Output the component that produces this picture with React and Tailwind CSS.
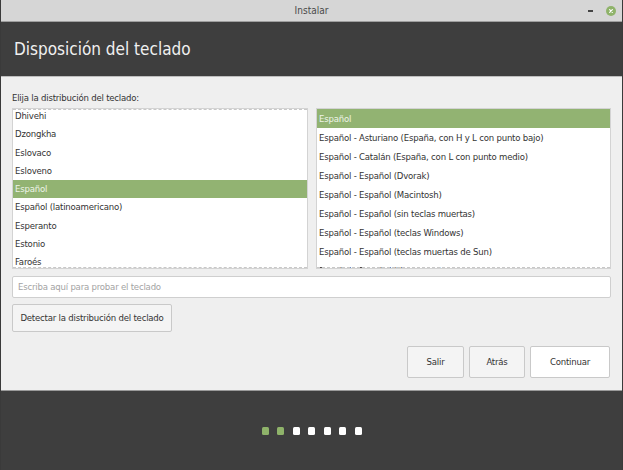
import React from "react";

const leftItems = ["Dhivehi","Dzongkha","Eslovaco","Esloveno","Español","Español (latinoamericano)","Esperanto","Estonio","Faroés","Filipino"];
const rightItems = ["Español","Español - Asturiano (España, con H y L con punto bajo)","Español - Catalán (España, con L con punto medio)","Español - Español (Dvorak)","Español - Español (Macintosh)","Español - Español (sin teclas muertas)","Español - Español (teclas Windows)","Español - Español (teclas muertas de Sun)","Español - Español (tilde muerta)"];

export default function App() {
  return (
    <div className="w-[623px] h-[470px] flex flex-col bg-[#efefef] border-x border-[#3a3a3a] overflow-hidden text-[#333]" style={{fontFamily: '"DejaVu Sans Condensed", "Liberation Sans Narrow", "Noto Sans", sans-serif'}}>
      <div className="h-[22px] shrink-0 bg-[#d6d6d6] border-b border-[#9e9e9e] relative flex items-center justify-center">
        <span className="text-[10px] text-[#4a4a4a]">Instalar</span>
        <span className="absolute left-[587px] top-[10px] w-[5px] h-[2px] bg-[#444]"></span>
        <span className="absolute left-[605px] top-[6px] w-[10px] h-[10px] rounded-full bg-[#8fb36a] flex items-center justify-center">
          <svg width="4" height="4" viewBox="0 0 4 4"><path d="M0.3 0.3L3.7 3.7M3.7 0.3L0.3 3.7" stroke="#fff" strokeWidth="1.2"/></svg>
        </span>
      </div>
      <div className="h-[55px] shrink-0 bg-[#3e3e3e] border-b border-[#bdbdbd] flex items-center pl-[13px]">
        <span className="text-[17px] text-[#f0f0f0] leading-none whitespace-nowrap">Disposición del teclado</span>
      </div>
      <div className="flex-1 flex flex-col pl-[11px] pr-[11px] tracking-[-0.2px]">
        <div className="mt-[12px] h-[19px] text-[9.5px] leading-[17px] whitespace-nowrap">Elija la distribución del teclado:</div>
        <div className="flex gap-[8px] h-[161px]">
          <div className="w-[297px] bg-white border border-[#d3d3d3] overflow-hidden relative">
            <div className="absolute left-0 right-0 top-0 border-t border-dashed border-[#c8c8c8] z-10"></div>
            <div className="absolute left-0 right-0 bottom-0 border-t border-dashed border-[#c8c8c8] z-10"></div>
            <div className="-mt-[2px]">
              {leftItems.map((t) => (
                <div key={t} className={"h-[18.25px] leading-[18.25px] px-[2px] text-[9.5px] whitespace-nowrap " + (t === "Español" ? "bg-[#92b372] text-[#eef3e8]" : "")}>{t}</div>
              ))}
            </div>
          </div>
          <div className="w-[296px] bg-white border border-[#d3d3d3] overflow-hidden relative">
            <div className="absolute left-0 right-0 bottom-0 border-t border-dashed border-[#c8c8c8] z-10"></div>
            <div>
              {rightItems.map((t, i) => (
                <div key={t} className={"h-[19px] leading-[19px] px-[2px] text-[9.5px] whitespace-nowrap " + (i === 0 ? "bg-[#92b372] text-[#eef3e8]" : "")}>{t}</div>
              ))}
            </div>
          </div>
        </div>
        <div className="mt-[7px] h-[22px] bg-white border border-[#cfcfcf] rounded-[2px] flex items-center px-[5px]">
          <span className="text-[9.5px] text-[#a3a3a3] whitespace-nowrap">Escriba aquí para probar el teclado</span>
        </div>
        <div className="mt-[6px] w-[160px] h-[28px] border border-[#c9c9c9] rounded-[2px] bg-[#f4f4f4] flex items-center justify-center text-[9.5px] whitespace-nowrap">Detectar la distribución del teclado</div>
        <div className="mt-[14px] flex justify-end gap-[5px] pr-[1px]">
          <div className="w-[57px] h-[32px] border border-[#c9c9c9] rounded-[2px] bg-[#f4f4f4] flex items-center justify-center text-[9.5px]">Salir</div>
          <div className="w-[56px] h-[32px] border border-[#c9c9c9] rounded-[2px] bg-[#f4f4f4] flex items-center justify-center text-[9.5px]">Atrás</div>
          <div className="w-[80px] h-[32px] border border-[#c9c9c9] rounded-[2px] bg-white flex items-center justify-center text-[9.5px]">Continuar</div>
        </div>
      </div>
      <div className="h-[80px] shrink-0 bg-[#3e3e3e] border-t border-[#9a9a9a] flex items-center justify-center gap-[8.5px]">
        {[0,1,2,3,4,5,6].map((i) => (
          <span key={i} className={"w-[7px] h-[8px] rounded-[1.5px] " + (i < 2 ? "bg-[#8fb36a]" : "bg-white")}></span>
        ))}
      </div>
    </div>
  );
}
